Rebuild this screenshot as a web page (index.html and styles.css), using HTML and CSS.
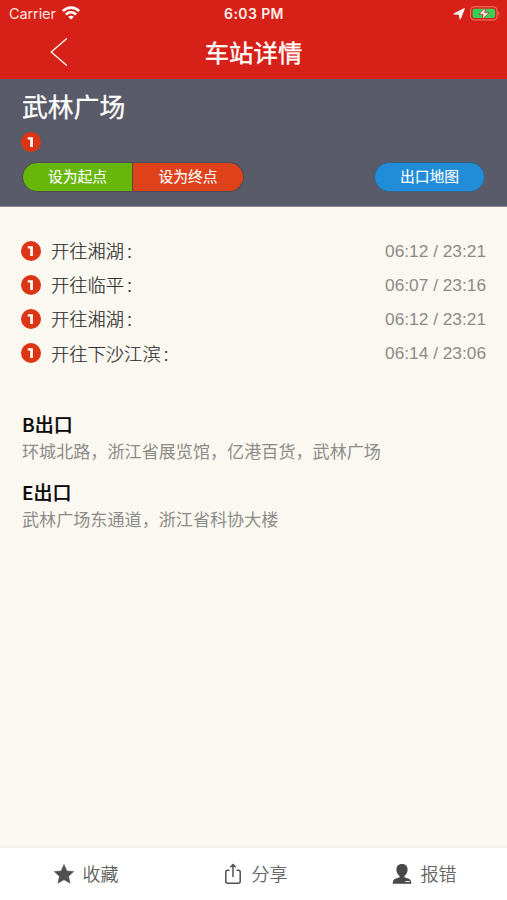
FILE: index.html
```html
<!DOCTYPE html>
<html lang="zh-CN">
<head>
<meta charset="utf-8">
<title>车站详情</title>
<link rel="stylesheet" href="styles.css">
</head>
<body>
<div class="app">
  <header class="top">
    <div class="status">
      <div class="status-left"><span>Carrier</span>
        <svg class="wifi" width="18" height="14" viewBox="0 0 18 14" fill="none" stroke="#fff" stroke-width="2.600"><path d="M.8 5.1C5.5.4 12.500.4 17.200 5.100M3.900 8.500c3-2.800 7.200-2.800 10.200 0"/><path d="M9 13.500 6.200 10.900c1.600-1.500 4-1.500 5.600 0z" fill="#fff" stroke="none"/></svg>
      </div>
      <div class="status-time">6:03 PM</div>
      <div class="status-right">
        <svg width="12" height="12" viewBox="0 0 12 12" fill="#fff" stroke="#fff" stroke-width="1" stroke-linejoin="round"><path d="M11.400.6 7.200 11.200 6.200 6.200.8 5.900z"/></svg>
        <svg width="31" height="15" viewBox="0 0 31 15"><rect x=".6" y=".8" width="26.500" height="13.200" rx="4" fill="none" stroke="#ef7866" stroke-width="1.100"/><rect x="2.600" y="2.800" width="22.500" height="9.200" rx="2" fill="#35cf5b"/><path d="M28.500 5.200q2 2.200 0 4.400z" fill="#ef7866"/><path d="M15.500 1.800 8.900 8.200h4.300l-1.100 5.200 7-6.700h-4.400z" fill="#fff" stroke="#d72118" stroke-width=".8"/></svg>
      </div>
    </div>
    <div class="nav">
      <svg class="back" width="18" height="30" viewBox="0 0 18 30" fill="none" stroke="#fff" stroke-width="1.300"><path d="M16.800 1.400 1.200 15l15.600 13.600"/></svg>
      <h1>车站详情</h1>
    </div>
  </header>
  <section class="station">
    <h2>武林广场</h2>
    <svg class="line" viewBox="0 0 20 20"><use href="#line-one"/></svg>
    <div class="actions">
      <div class="pair"><button class="start">设为起点</button><button class="end">设为终点</button></div>
      <button class="map">出口地图</button>
    </div>
  </section>
  <main>
    <ul class="routes">
      <li><svg class="line" viewBox="0 0 20 20"><use href="#line-one"/></svg><span class="dest">开往湘湖<i>:</i></span><span class="hours">06:12 / 23:21</span></li>
      <li><svg class="line" viewBox="0 0 20 20"><use href="#line-one"/></svg><span class="dest">开往临平<i>:</i></span><span class="hours">06:07 / 23:16</span></li>
      <li><svg class="line" viewBox="0 0 20 20"><use href="#line-one"/></svg><span class="dest">开往湘湖<i>:</i></span><span class="hours">06:12 / 23:21</span></li>
      <li><svg class="line" viewBox="0 0 20 20"><use href="#line-one"/></svg><span class="dest">开往下沙江滨<i>:</i></span><span class="hours">06:14 / 23:06</span></li>
    </ul>
    <div class="exit"><h3>B出口</h3><p>环城北路，浙江省展览馆，亿港百货，武林广场</p></div>
    <div class="exit"><h3>E出口</h3><p>武林广场东通道，浙江省科协大楼</p></div>
  </main>
  <footer>
    <div class="tab"><svg width="20" height="20" viewBox="0 0 20 20" fill="#505050" stroke="#505050" stroke-width=".5"><path d="m10 .5 2.900 6.400 6.900.7-5.200 4.700 1.500 6.900L10 15.700l-6.100 3.500 1.500-6.900L.2 7.600l6.900-.7z"/></svg><span>收藏</span></div>
    <div class="tab"><svg width="20" height="22" viewBox="0 0 20 22" fill="none" stroke="#505050" stroke-width="1.500"><path d="M6.500 7.200H4.800q-2 0-2 2v9q0 2 2 2h10.400q2 0 2-2v-9q0-2-2-2h-1.700M10 14V1.800M7.300 4.200 10 1.500l2.700 2.700"/></svg><span>分享</span></div>
    <div class="tab"><svg width="20" height="20" viewBox="0 0 20 20" fill="#484848"><path d="M10 0C6.500 0 4.400 2.200 4.400 5.500c0 2.800 1.200 5.200 3.200 6.500v1.200L2.600 15Q.6 16 .6 19.700h18.800q0-3.700-2-4.700l-5-1.800V12c2-1.300 3.200-3.700 3.200-6.500C15.600 2.200 13.500 0 10 0z"/><path d="M12.600 16.900h5.200v1.200H14z" fill="#fff"/></svg><span>报错</span></div>
  </footer>
</div>
<svg width="0" height="0" class="defs"><defs><g id="line-one"><circle cx="10" cy="10" r="10" fill="#dc3515"/><path d="M6.700 5.200h5.200V15H9.200V7.400H6.700z" fill="#fff"/></g></defs></svg>
</body>
</html>
```
FILE: styles.css
```css
* { box-sizing: border-box; margin: 0; padding: 0; }
body { font-family: "Liberation Sans", "Noto Sans CJK SC", sans-serif; background: #fbf8f1; overflow: hidden; }
svg { display: block; flex: none; }
.defs { position: absolute; }
.app { width: 507px; height: 900px; display: flex; flex-direction: column; }
.top { height: 79px; background: #d72118; color: #fff; }
.status { height: 27px; display: grid; grid-template-columns: 1fr auto 1fr; align-items: center; padding: 0 6px 0 9px; font: 14.5px/27px Inter, sans-serif; }
.status-left { display: flex; align-items: center; gap: 6px; color: #ffe5df; letter-spacing: -.1px; }
.wifi { margin-top: -2px; }
.status-time { font-weight: 600; font-size: 14px; letter-spacing: .4px; margin-left: -2px; color: #ffeeea; }
.status-right { display: flex; justify-content: flex-end; align-items: center; gap: 5px; }
.nav { height: 52px; display: grid; grid-template-columns: 1fr auto 1fr; align-items: center; }
.back { margin-left: 50px; margin-top: -2px; }
h1 { font: 400 24.400px/50px "Noto Sans CJK SC", sans-serif; -webkit-text-stroke: .4px #fff; height: 52px; }
.station { height: 128px; background: #595b69; border-bottom: 1px solid #8c8c92; padding: 8px 22px 0; color: #fff; }
h2 { font: 400 25.800px/38px "Noto Sans CJK SC", sans-serif; -webkit-text-stroke: .3px #fff; }
.line { width: 20px; height: 20px; }
.station .line { margin-top: 7px; margin-left: -.7px; }
.actions { display: flex; justify-content: space-between; margin-top: 10px; }
.pair { display: flex; }
button { width: 111px; height: 30px; padding-bottom: 2px; border: 1px solid #4a4c50; color: #fff; font: 400 14.800px/26px "Noto Sans CJK SC", sans-serif; -webkit-text-stroke: .1px #fff; }
.start { background: #66b708; border-radius: 15px 0 0 15px; }
.end { background: #df421b; border-radius: 0 15px 15px 0; border-left: 0; }
.map { background: #218dd9; border-radius: 15px; border-color: #39637f; }
main { flex: 1; padding: 27px 21px 0 22px; }
.routes { list-style: none; margin-bottom: 39px; }
.routes li { height: 34.200px; display: flex; align-items: center; }
.routes .line { margin-left: -.7px; margin-top: -1px; }
.dest { margin-left: 9.700px; margin-top: -2px; font: 300 18.300px/34px "Noto Sans CJK SC", sans-serif; color: #303030; -webkit-text-stroke: .2px #303030; }
.dest i { font-style: normal; margin-left: 3px; }
.hours { margin-left: auto; font-size: 17.300px; color: #8b8a88; }
.exit { height: 68px; }
h3 { font: 500 19px/28px "Noto Sans CJK SC", sans-serif; color: #080808; -webkit-text-stroke: .2px #080808; }
.exit p { font: 400 17.100px/26px "Noto Sans CJK SC", sans-serif; color: #8d8c89; white-space: nowrap; }
footer { height: 54px; background: #fff; border-top: 2px solid #f2f0ed; display: grid; grid-template-columns: repeat(3, 1fr); }
.tab { display: flex; justify-content: center; align-items: center; gap: 9px; font: 300 18px/50px "Noto Sans CJK SC", sans-serif; color: #505050; padding-left: 3px; }
.tab span { margin-top: -2px; -webkit-text-stroke: .2px #505050; }
.tab svg { margin-top: -1px; }
```
